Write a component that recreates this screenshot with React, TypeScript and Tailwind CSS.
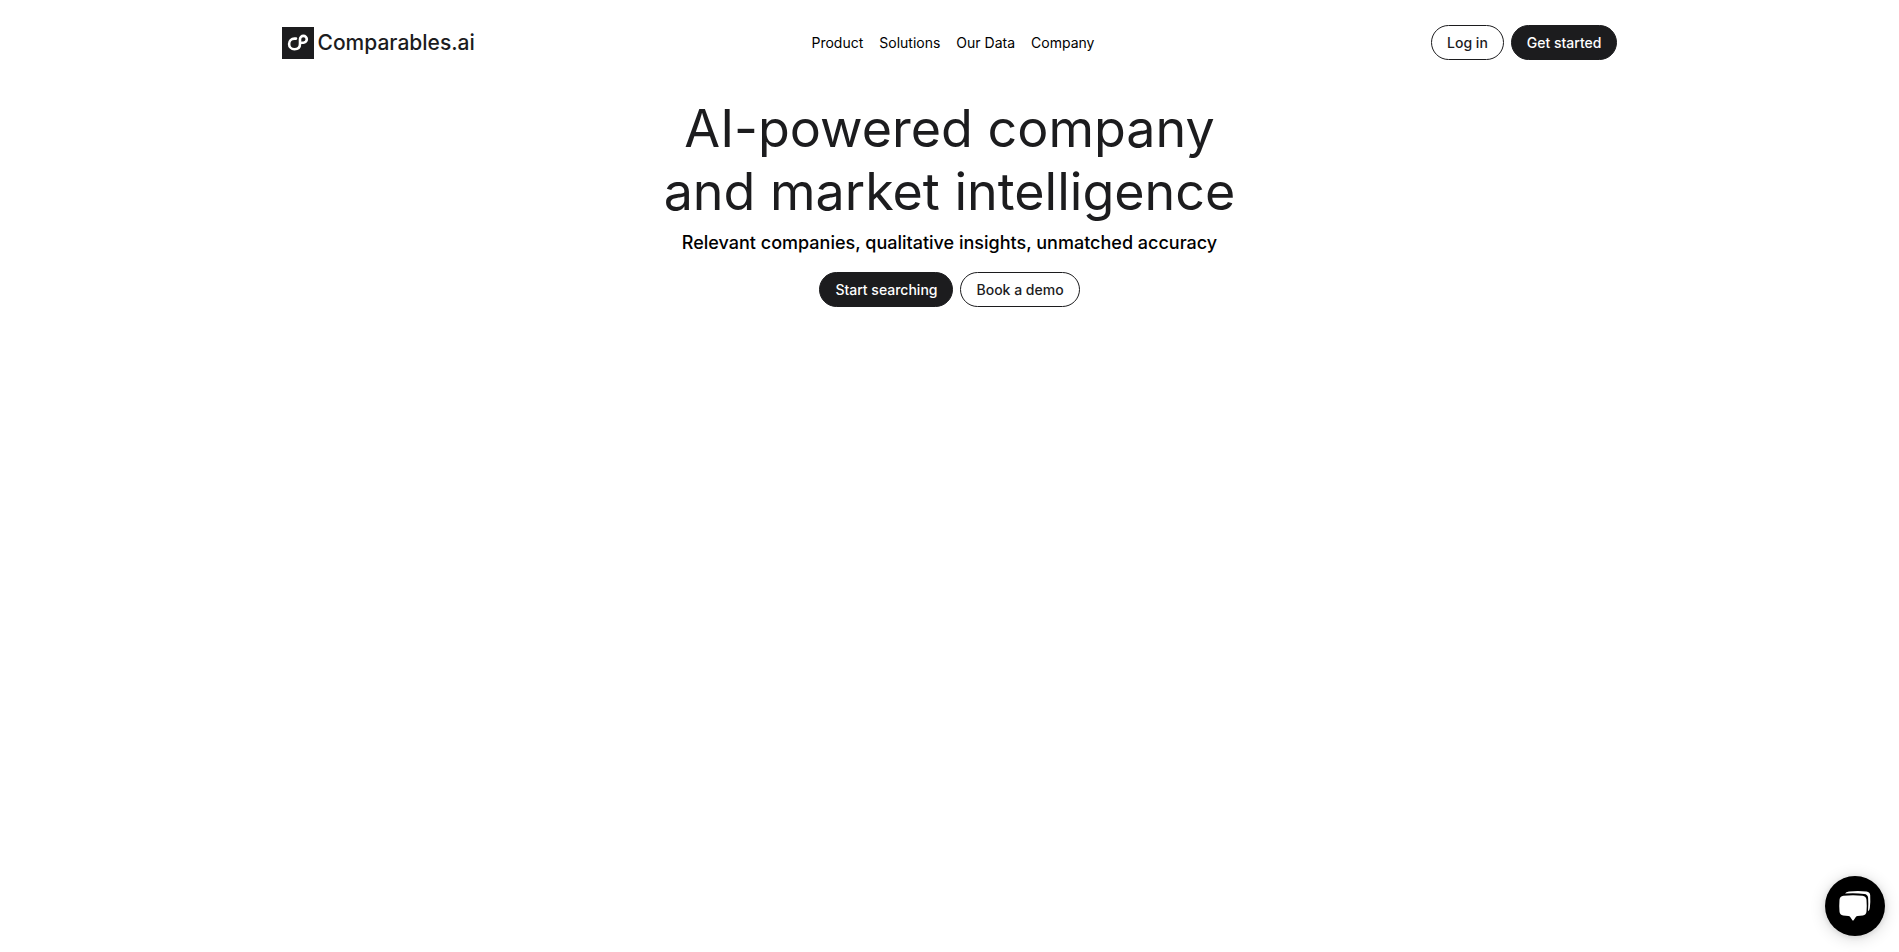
const pill =
  "flex h-[35px] cursor-pointer items-center justify-center rounded-full border border-[#1c1c1e] px-[15px] text-sm font-medium";
const outline = `${pill} bg-white text-[#1c1c1e]`;
const solid = `${pill} bg-[#1c1c1e] text-white`;

const links = ["Product", "Solutions", "Our Data", "Company"];

function LogoMark() {
  return (
    <svg viewBox="0 0 32 32" className="size-8" aria-hidden="true">
      <rect width="32" height="32" fill="#1c1c1e" />
      <path
        d="M14 11.6H12.4A5.2 5.2 0 0 0 12.4 22.2C16 22.2 18 20 18 17V12.3A3.4 3.4 0 1 1 21.4 15.7H20"
        fill="none"
        stroke="#fff"
        strokeWidth="2.6"
        strokeLinecap="round"
        strokeLinejoin="round"
      />
    </svg>
  );
}

function ChatIcon() {
  return (
    <svg viewBox="0 0 60 60" className="size-[60px]" fill="#fff" aria-hidden="true">
      <path d="M20 17.6Q21 15.6 24 15.4Q33 14.6 41.5 15.4Q45 15.8 45.2 19.2Q45.6 26 44.8 32Q44.5 34.6 43 35.2Q43.6 28 43.1 21.8Q42.8 18.2 39.2 17.9Q30 17 20 17.6Z" />
      <path d="M18.5 19.8Q28 18.8 37.5 19.8Q41.2 20.2 41.5 23.8Q42 30 41.5 35.6Q41.2 39 37.8 39.4L32.6 39.9Q31.4 40 30.8 41L28.6 44.3Q28 45 27.4 44.3L25.2 41Q24.6 40 23.4 39.9L18.2 39.4Q14.8 39 14.5 35.6Q14 30 14.5 23.8Q14.8 20.2 18.5 19.8Z" />
    </svg>
  );
}

export default function App() {
  return (
    <div className="min-h-screen bg-white font-['Inter',sans-serif] text-[#1c1c1e]">
      <header className="mx-auto flex max-w-[1336px] items-center justify-between pt-[25px]">
        <a href="#" className="flex items-center gap-1 text-[21px] leading-8 font-medium">
          <LogoMark />
          Comparables.ai
        </a>
        <nav className="flex gap-4 text-sm text-black">
          {links.map((label) => (
            <a key={label} href="#">
              {label}
            </a>
          ))}
        </nav>
        <div className="flex gap-[7px]">
          <button className={outline}>Log in</button>
          <button className={solid}>Get started</button>
        </div>
      </header>
      <main className="flex flex-col items-center pt-[37px] text-center">
        <h1 className="text-[52px] leading-[63px]">
          AI-powered company
          <br />
          and market intelligence
        </h1>
        <p className="mt-1.5 text-lg font-medium text-black">
          Relevant companies, qualitative insights, unmatched accuracy
        </p>
        <div className="mt-[15px] flex gap-[7px]">
          <button className={solid}>Start searching</button>
          <button className={outline}>Book a demo</button>
        </div>
      </main>
      <button
        aria-label="Open chat"
        className="fixed right-[14px] bottom-4 size-[60px] cursor-pointer rounded-full bg-black shadow-[0_1px_6px_rgba(0,0,0,0.1),0_2px_16px_rgba(0,0,0,0.16)]"
      >
        <ChatIcon />
      </button>
    </div>
  );
}
